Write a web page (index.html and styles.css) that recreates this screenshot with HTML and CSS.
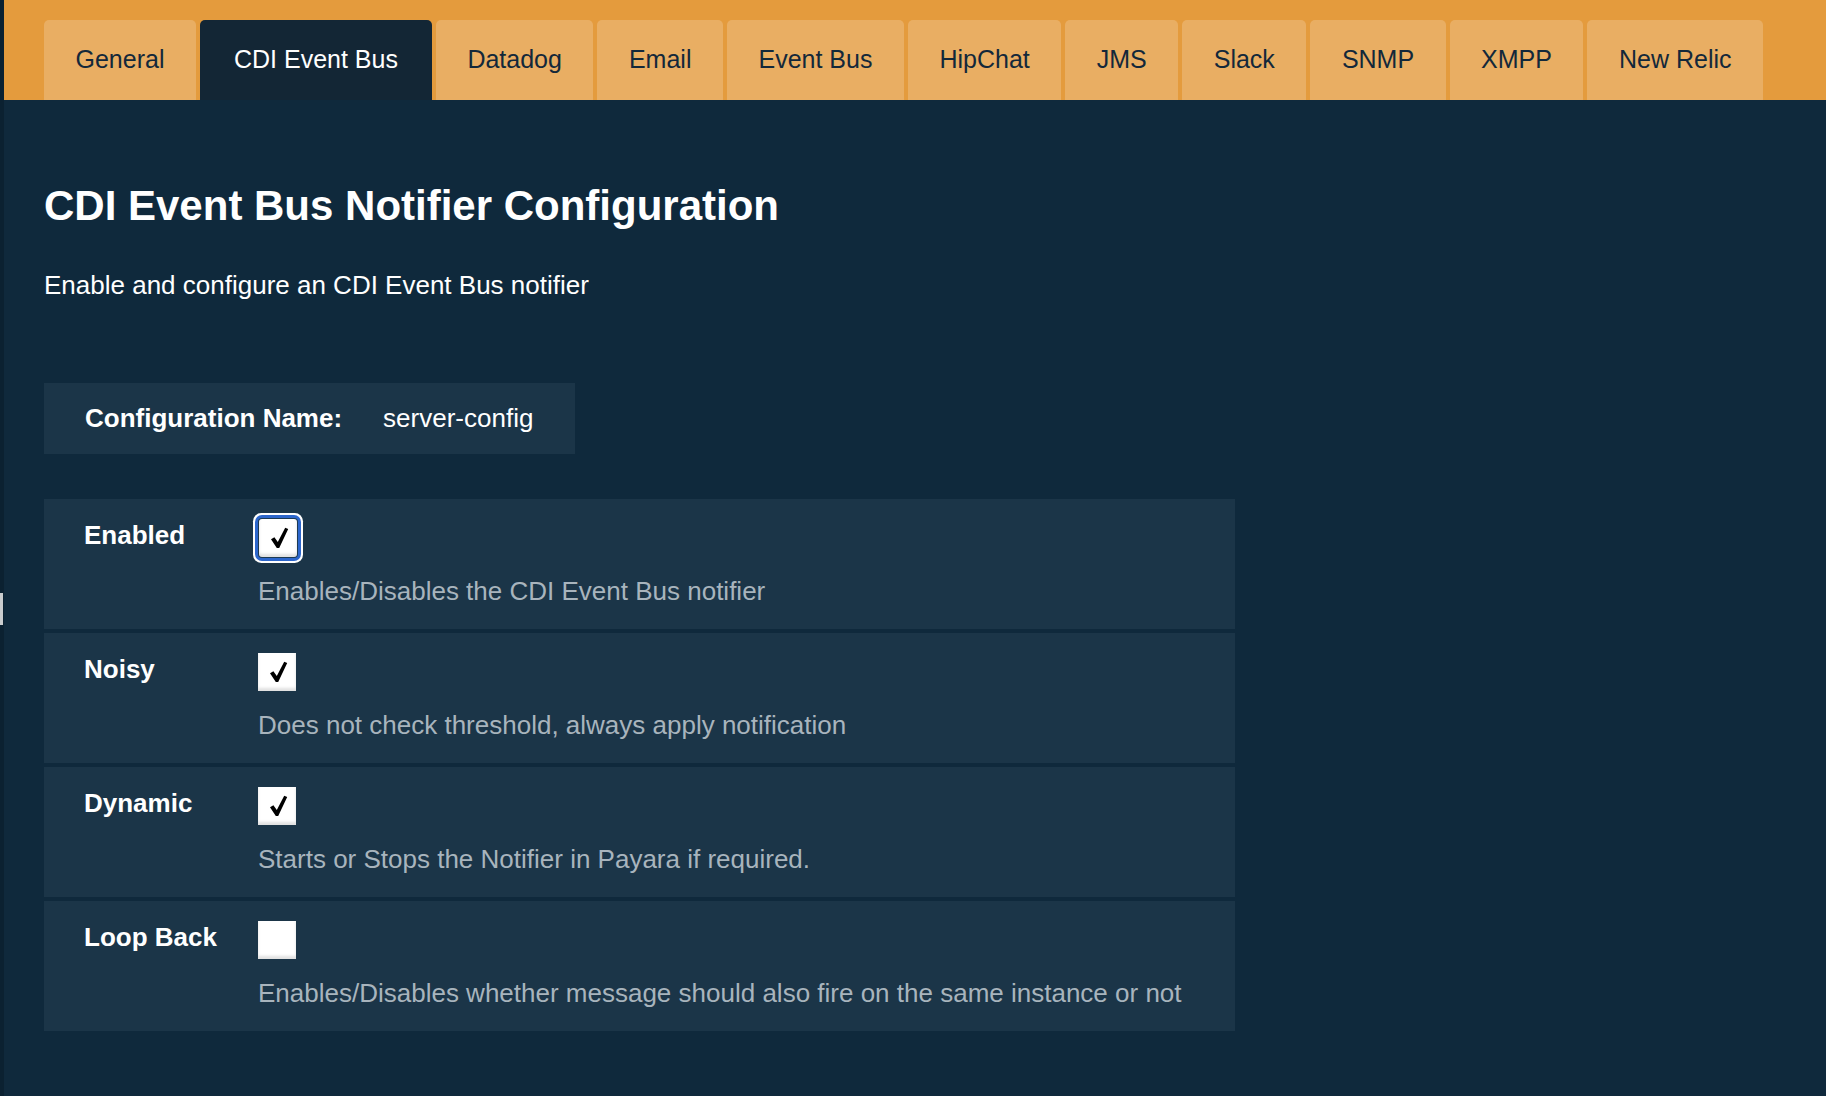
FILE: index.html
```html
<!DOCTYPE html>
<html lang="en">
<head>
<meta charset="utf-8">
<title>CDI Event Bus Notifier Configuration</title>
<link rel="stylesheet" href="styles.css">
</head>
<body>
<div class="edge-mark"></div>
<nav class="tabbar">
  <a class="tab">General</a>
  <a class="tab active">CDI Event Bus</a>
  <a class="tab">Datadog</a>
  <a class="tab">Email</a>
  <a class="tab">Event Bus</a>
  <a class="tab">HipChat</a>
  <a class="tab">JMS</a>
  <a class="tab">Slack</a>
  <a class="tab">SNMP</a>
  <a class="tab">XMPP</a>
  <a class="tab">New Relic</a>
</nav>
<main class="content">
  <h1 class="title">CDI Event Bus Notifier Configuration</h1>
  <p class="subtitle">Enable and configure an CDI Event Bus notifier</p>
  <div class="config-name">
    <span class="config-label">Configuration Name:</span>
    <span class="config-value">server-config</span>
  </div>
  <div class="rows">
    <div class="row">
      <div class="label">Enabled</div>
      <div class="field">
        <span class="checkbox focused"><svg class="check" viewBox="0 0 20 22"><path d="M1 12.2 L4.4 10.2 L7.8 15 L15.2 0.8 L18.2 2 L9.2 21 L6.8 21 Z"/></svg></span>
        <div class="desc">Enables/Disables the CDI Event Bus notifier</div>
      </div>
    </div>
    <div class="row">
      <div class="label">Noisy</div>
      <div class="field">
        <span class="checkbox"><svg class="check" viewBox="0 0 20 22"><path d="M1 12.2 L4.4 10.2 L7.8 15 L15.2 0.8 L18.2 2 L9.2 21 L6.8 21 Z"/></svg></span>
        <div class="desc">Does not check threshold, always apply notification</div>
      </div>
    </div>
    <div class="row">
      <div class="label">Dynamic</div>
      <div class="field">
        <span class="checkbox"><svg class="check" viewBox="0 0 20 22"><path d="M1 12.2 L4.4 10.2 L7.8 15 L15.2 0.8 L18.2 2 L9.2 21 L6.8 21 Z"/></svg></span>
        <div class="desc">Starts or Stops the Notifier in Payara if required.</div>
      </div>
    </div>
    <div class="row">
      <div class="label">Loop Back</div>
      <div class="field">
        <span class="checkbox"></span>
        <div class="desc">Enables/Disables whether message should also fire on the same instance or not</div>
      </div>
    </div>
  </div>
</main>
</body>
</html>
```

FILE: styles.css
```css
html, body {
  margin: 0;
  padding: 0;
}

body {
  background: #0f293c;
  border-left: 4px solid #0b2131;
  min-height: 1096px;
  box-sizing: border-box;
  font-family: "Liberation Sans", Arial, Helvetica, sans-serif;
  color: #ffffff;
}

.edge-mark {
  position: fixed;
  left: 0;
  top: 593px;
  width: 3px;
  height: 32px;
  background: #c9ccce;
}

.tabbar {
  display: flex;
  gap: 4px;
  height: 100px;
  box-sizing: border-box;
  padding: 20px 40px 0;
  background: #e49b3d;
}

.tab {
  display: block;
  height: 80px;
  box-sizing: border-box;
  padding: 24px 31.5px 0;
  font-size: 25px;
  line-height: 30px;
  color: #13283a;
  background: #e9ae63;
  border-radius: 5px 5px 0 0;
  white-space: nowrap;
}

.tab.active {
  padding: 24px 34px 0;
  background: #132635;
  color: #ffffff;
}

.content {
  padding: 0 40px;
}

.title {
  margin: 82px 0 0;
  font-size: 42px;
  line-height: 48px;
  font-weight: bold;
}

.subtitle {
  margin: 39px 0 0;
  font-size: 26px;
  line-height: 32px;
}

.config-name {
  display: inline-flex;
  gap: 41px;
  margin-top: 82px;
  padding: 20px 42px 20px 41px;
  background: #1b3548;
  font-size: 26px;
  line-height: 31px;
}

.config-label {
  font-weight: bold;
}

.rows {
  display: flex;
  flex-direction: column;
  gap: 4px;
  width: 1191px;
  margin-top: 45px;
}

.row {
  display: flex;
  padding: 20px 40px 22px;
  background: #1b3548;
}

.label {
  width: 174px;
  flex: none;
  font-size: 26px;
  line-height: 32px;
  font-weight: bold;
}

.field {
  display: flex;
  flex-direction: column;
  align-items: flex-start;
}

.checkbox {
  display: flex;
  align-items: center;
  justify-content: center;
  width: 38px;
  height: 38px;
  margin-bottom: 18px;
  box-sizing: border-box;
  padding-left: 3px;
  background: #ffffff;
  box-shadow: inset 0 -3px 3px rgba(0, 0, 0, 0.12);
}

.checkbox.focused {
  margin-left: 1px;
  border-radius: 3px;
  box-shadow: inset 0 -3px 3px rgba(0, 0, 0, 0.12), 0 0 0 1px #1d3a52, 0 0 0 4px #2c66cc, 0 0 0 6px #ffffff;
}

.check {
  width: 20px;
  height: 22px;
  fill: #000000;
}

.desc {
  font-size: 26px;
  line-height: 32px;
  color: #a8b4bd;
}
```
